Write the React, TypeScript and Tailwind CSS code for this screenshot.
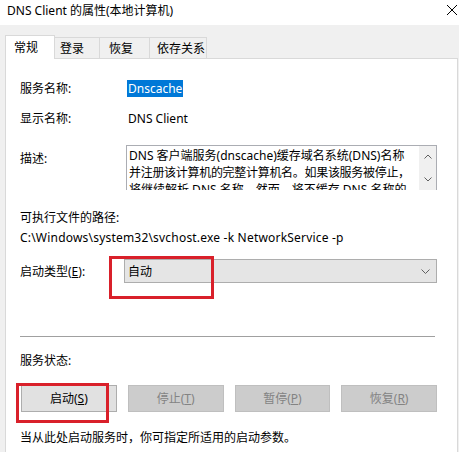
import React from "react"

const font = { fontFamily: '"Noto Sans", "Noto Sans CJK SC", sans-serif' }

function Tab({ label, className }: { label: string; className: string }) {
  return (
    <div className={"flex h-[21px] items-center border-t border-r border-[#d9d9d9] bg-[#f0f0f0] " + className}>
      {label}
    </div>
  )
}

function Btn({ children, disabled }: { children: React.ReactNode; disabled?: boolean }) {
  return (
    <div
      className={
        disabled
          ? "flex h-[27px] w-[96px] items-center justify-center border border-[#bfbfbf] bg-[#cccccc] text-[#838383]"
          : "flex h-[27px] w-[96px] items-center justify-center border border-[#adadad] bg-[#e1e1e1] text-black"
      }
    >
      {children}
    </div>
  )
}

export default function App() {
  return (
    <div className="flex h-[452px] w-[459px] flex-col overflow-hidden bg-white text-[12px] leading-[17px] text-black" style={font}>
      {/* title bar */}
      <div className="flex h-[25px] shrink-0 items-center justify-between pl-[7px] pr-[1px]">
        <span className="-mt-[5px]">DNS Client 的属性(本地计算机)</span>
        <svg width="12" height="12" viewBox="0 0 12 12" className="-mt-[6px]">
          <path d="M1 1 L11 11 M11 1 L1 11" stroke="#000" strokeWidth="1" />
        </svg>
      </div>

      <div className="flex flex-1 flex-col bg-[#f0f0f0] pl-[5px] pr-[1px] pt-[10px]">
        {/* tabs */}
        <div className="flex h-[23px] items-end">
          <div className="relative z-10 -mb-px flex h-[24px] w-[50px] items-start border border-b-0 border-[#d9d9d9] bg-white pl-[8px] pt-[3px]">
            常规
          </div>
          <Tab label="登录" className="w-[45px] pl-[5px]" />
          <Tab label="恢复" className="w-[50px] pl-[9px]" />
          <Tab label="依存关系" className="w-[57px] pl-[7px]" />
        </div>

        {/* panel */}
        <div className="relative flex flex-1 flex-col border border-b-0 border-[#d9d9d9] bg-white pl-[14px] pr-[20px]">
          <div className="mt-[21px] flex h-[17px] items-center">
            <span className="w-[107px]">服务名称:</span>
            <span className="bg-[#0078d7] px-px text-white">Dnscache</span>
          </div>

          <div className="mt-[13px] flex h-[17px] items-center">
            <span className="w-[108px]">显示名称:</span>
            <span>DNS Client</span>
          </div>

          <div className="mt-[18px] flex items-start">
            <span className="mt-[5px] w-[106px]">描述:</span>
            <div className="flex h-[45px] flex-1 overflow-hidden border border-b-0 border-[#abadb3]">
              <div className="flex-1 overflow-hidden whitespace-nowrap pl-[2px] pt-[1px] leading-[17px]">
                <div>DNS 客户端服务(dnscache)缓存域名系统(DNS)名称</div>
                <div className="tracking-[-0.3px]">并注册该计算机的完整计算机名。如果该服务被停止，</div>
                <div>将继续解析 DNS 名称。然而，将不缓存 DNS 名称的</div>
              </div>
              <div className="flex w-[17px] shrink-0 flex-col items-center justify-between bg-[#f0f0f0] py-[8px]">
                <svg width="8" height="5" viewBox="0 0 8 5">
                  <path d="M0.5 4.5 L4 1 L7.5 4.5" stroke="#606060" fill="none" />
                </svg>
                <svg width="8" height="5" viewBox="0 0 8 5">
                  <path d="M0.5 0.5 L4 4 L7.5 0.5" stroke="#606060" fill="none" />
                </svg>
              </div>
            </div>
          </div>

          <div className="mt-[19px] h-[17px]">可执行文件的路径:</div>
          <div className="mt-[3px] h-[17px] tracking-[0.2px]">C:\Windows\system32\svchost.exe -k NetworkService -p</div>

          <div className="mt-[13px] flex items-center">
            <span className="w-[104px]">
              启动类型(<span className="underline">E</span>):
            </span>
            <div className="flex h-[24px] flex-1 items-center justify-between border border-[#adadad] bg-[#e5e5e5] pl-[3px] pr-[6px]">
              <span>自动</span>
              <svg width="9" height="5" viewBox="0 0 9 5">
                <path d="M0.5 0.5 L4.5 4.5 L8.5 0.5" stroke="#606060" fill="none" />
              </svg>
            </div>
          </div>

          <div className="mt-[53px] mr-[2px] h-px bg-[#a0a0a0]" />

          <div className="mt-[15px] h-[17px]">服务状态:</div>

          <div className="mt-[16px] flex gap-[11px] pl-px">
            <Btn>
              启动(<span className="underline">S</span>)
            </Btn>
            <Btn disabled>
              停止(<span className="underline">T</span>)
            </Btn>
            <Btn disabled>
              暂停(<span className="underline">P</span>)
            </Btn>
            <Btn disabled>
              恢复(<span className="underline">R</span>)
            </Btn>
          </div>

          <div className="mt-[17px] h-[17px] whitespace-nowrap">当从此处启动服务时，你可指定所适用的启动参数。</div>

          {/* annotation boxes */}
          <div className="absolute left-[103px] top-[197px] h-[43px] w-[105px] border-[3px] border-[#d9202a]" />
          <div className="absolute left-[10px] top-[324px] h-[40px] w-[93px] border-[3px] border-[#d9202a]" />
        </div>
      </div>
    </div>
  )
}
